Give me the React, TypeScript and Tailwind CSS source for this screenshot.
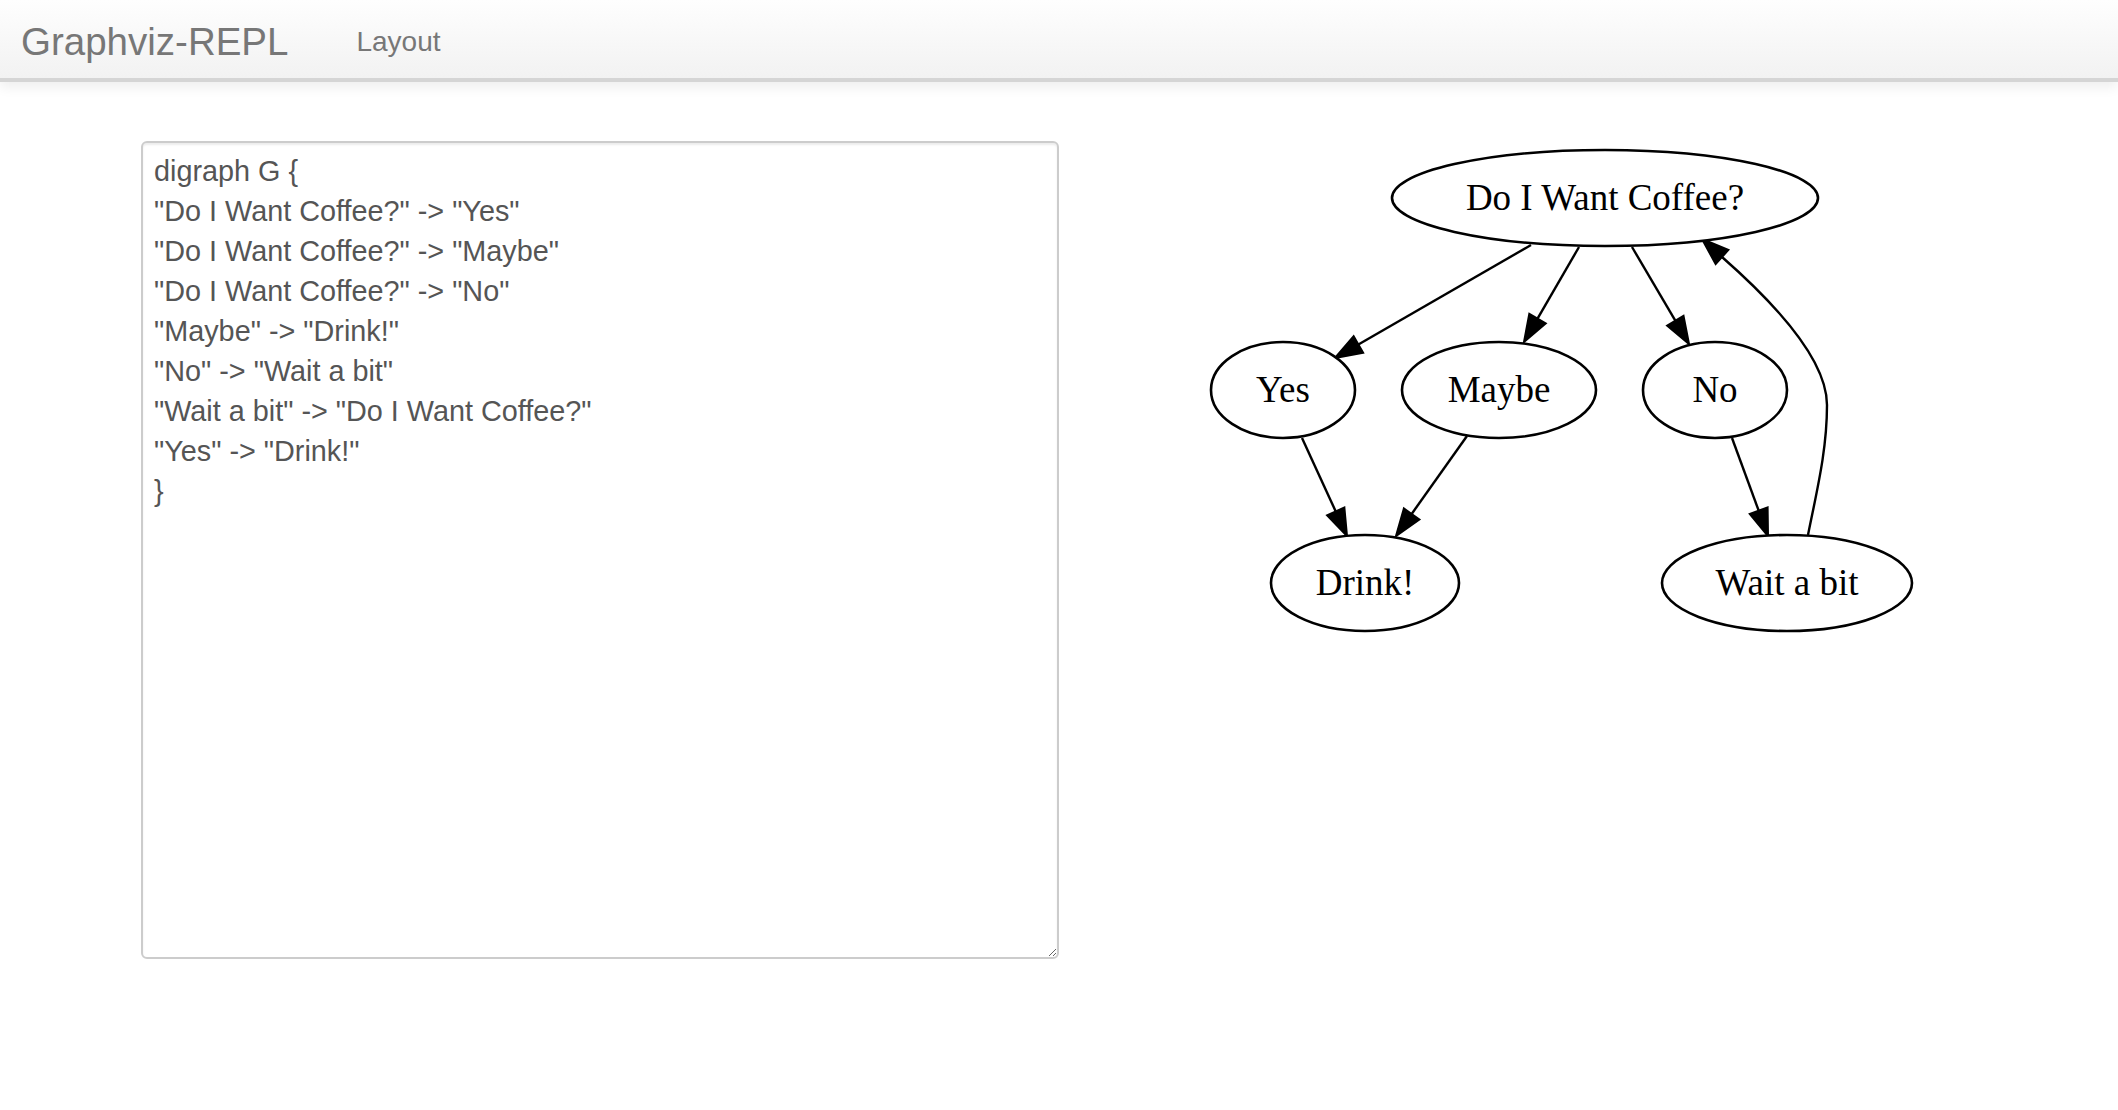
import React from 'react';

const source = `digraph G {
"Do I Want Coffee?" -> "Yes"
"Do I Want Coffee?" -> "Maybe"
"Do I Want Coffee?" -> "No"
"Maybe" -> "Drink!"
"No" -> "Wait a bit"
"Wait a bit" -> "Do I Want Coffee?"
"Yes" -> "Drink!"
}`;

type Node = { label: string; cx: number; cy: number; rx: number; ry: number };

const nodes: Node[] = [
  { label: 'Do I Want Coffee?', cx: 1605, cy: 198, rx: 213, ry: 48 },
  { label: 'Yes', cx: 1283, cy: 390, rx: 72, ry: 48 },
  { label: 'Maybe', cx: 1499, cy: 390, rx: 97, ry: 48 },
  { label: 'No', cx: 1715, cy: 390, rx: 72, ry: 48 },
  { label: 'Drink!', cx: 1365, cy: 583, rx: 94, ry: 48 },
  { label: 'Wait a bit', cx: 1787, cy: 583, rx: 125, ry: 48 },
];

// straight edges: start point and arrow tip
const edges = [
  [1531, 245, 1335, 358],
  [1579, 247, 1524, 342],
  [1632, 247, 1689, 344],
  [1302, 438, 1347, 536],
  [1467, 436, 1396, 536],
  [1732, 438, 1768, 536],
];

function head(bx: number, by: number, tx: number, ty: number) {
  const dx = tx - bx;
  const dy = ty - by;
  const len = Math.hypot(dx, dy);
  const nx = -dy / len;
  const ny = dx / len;
  const w = 9.5;
  return `${tx},${ty} ${bx + nx * w},${by + ny * w} ${bx - nx * w},${by - ny * w}`;
}

function Graph() {
  return (
    <svg width={730} height={510} viewBox="1200 141 730 510" className="block">
      {edges.map(([sx, sy, tx, ty], i) => {
        const len = Math.hypot(tx - sx, ty - sy);
        const bx = tx - ((tx - sx) / len) * 27;
        const by = ty - ((ty - sy) / len) * 27;
        return (
          <g key={i}>
            <line x1={sx} y1={sy} x2={bx} y2={by} stroke="black" strokeWidth={2.4} />
            <polygon points={head(bx, by, tx, ty)} fill="black" stroke="black" strokeWidth={2} />
          </g>
        );
      })}
      {/* back edge: Wait a bit -> Do I Want Coffee? */}
      <path
        d="M1808,535 C1817,490 1827,450 1827,405 C1827,355 1763,293 1722,257"
        fill="none"
        stroke="black"
        strokeWidth={2.4}
      />
      <polygon points={head(1722, 257, 1702, 239)} fill="black" stroke="black" strokeWidth={2} />
      {nodes.map((n) => (
        <g key={n.label}>
          <ellipse cx={n.cx} cy={n.cy} rx={n.rx} ry={n.ry} fill="white" stroke="black" strokeWidth={2.6} />
          <text
            x={n.cx}
            y={n.cy + 12}
            textAnchor="middle"
            fontSize={37}
            fontFamily='"Liberation Serif", "Times New Roman", serif'
            fill="black"
          >
            {n.label}
          </text>
        </g>
      ))}
    </svg>
  );
}

export default function App() {
  return (
    <div className="min-h-screen bg-white font-['Liberation_Sans',Arial,sans-serif]">
      <nav className="h-[82px] bg-gradient-to-b from-[#fefefe] to-[#f2f2f2] border-b-4 border-[#d5d5d5] shadow-[0_5px_12px_rgba(0,0,0,0.07)] flex items-start">
        <div className="pl-[21px] pt-[22px] text-[38.5px] leading-[40px] text-[#777]">
          Graphviz-REPL
        </div>
        <div className="ml-[68px] pt-[27px] text-[28px] leading-[29px] text-[#777]">
          Layout
        </div>
      </nav>
      <main className="flex pt-[59px] pl-[141px]">
        <textarea
          defaultValue={source}
          spellCheck={false}
          className="w-[918px] h-[818px] border-2 border-[#ccc] rounded-[6px] shadow-[inset_0_2px_2px_rgba(0,0,0,0.075)] px-[11px] pt-[8px] pb-[7px] text-[28.8px] leading-[40px] text-[#555] font-['Liberation_Sans',Arial,sans-serif] outline-none resize"
        />
        <div className="ml-[141px]">
          <Graph />
        </div>
      </main>
    </div>
  );
}
